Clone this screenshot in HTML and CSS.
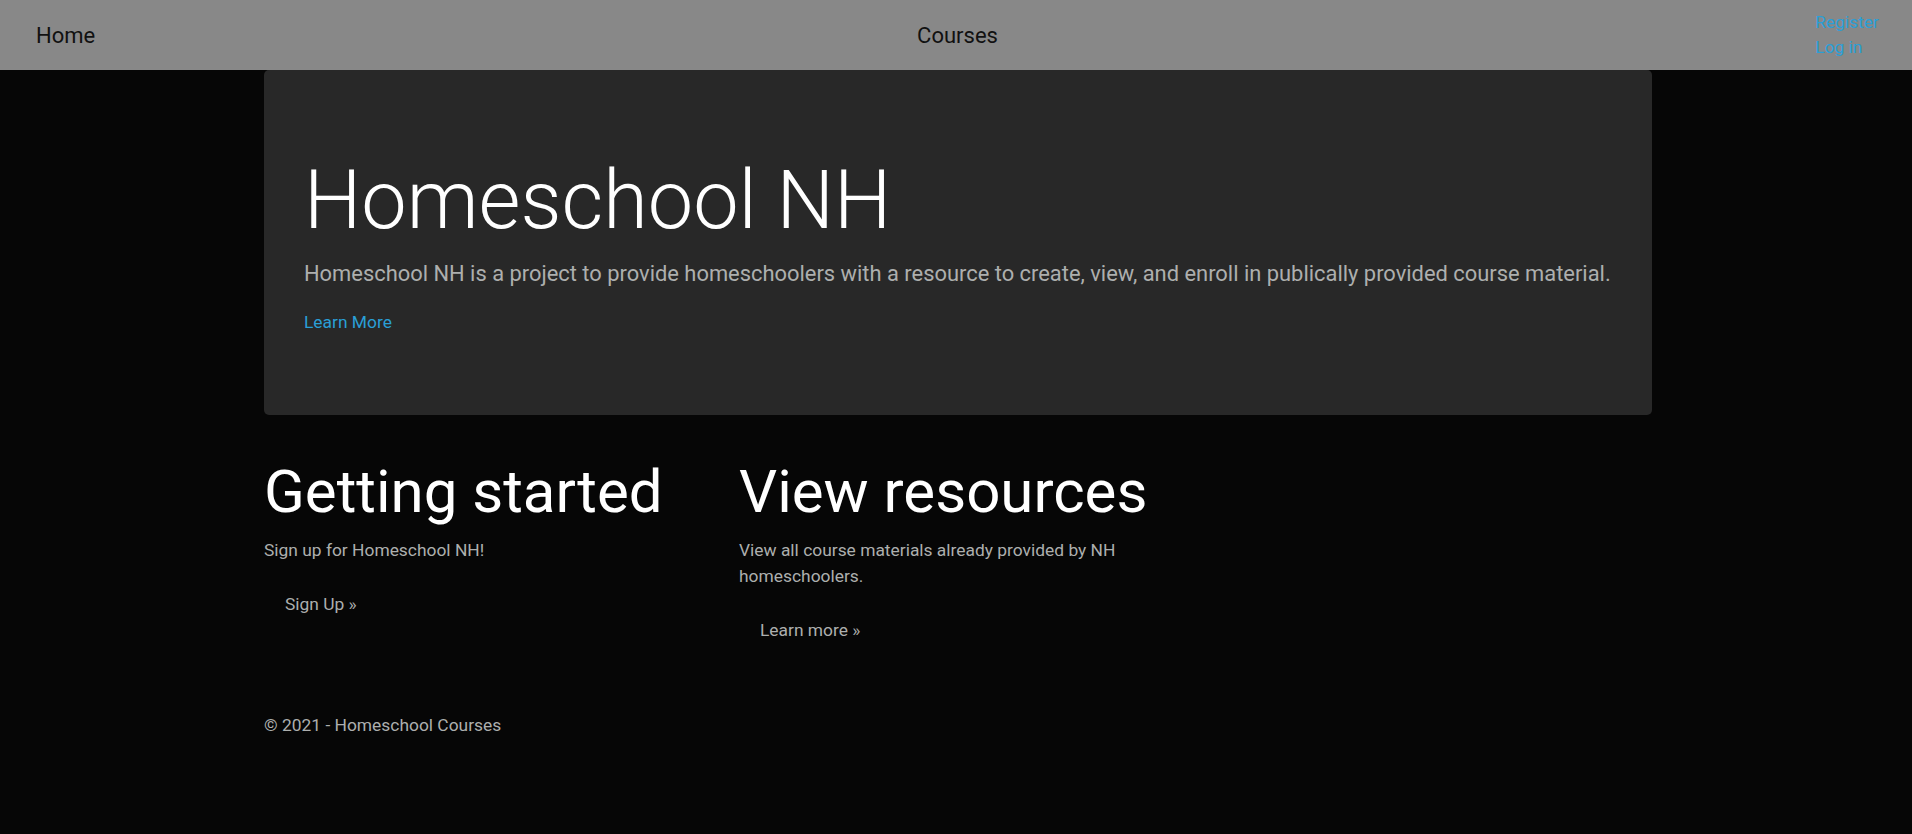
FILE: index.html
```html
<!DOCTYPE html>
<html lang="en">
<head>
<meta charset="utf-8">
<title>Home - Homeschool Courses</title>
<link rel="stylesheet" href="styles.css">
</head>
<body>
<header class="topbar">
  <a class="topbar-link" href="#">Home</a>
  <a class="topbar-link" href="#">Courses</a>
  <div class="auth">
    <a href="#">Register</a>
    <a href="#">Log in</a>
  </div>
</header>
<main class="container">
  <section class="hero">
    <h1 class="hero-title">Homeschool NH</h1>
    <p class="hero-lead">Homeschool NH is a project to provide homeschoolers with a resource to create, view, and enroll in publically provided course material.</p>
    <p class="hero-link"><a href="#">Learn More</a></p>
  </section>
  <div class="features">
    <div class="feature">
      <h2>Getting started</h2>
      <p>Sign up for Homeschool NH!</p>
      <p><a class="btn" href="#">Sign Up &raquo;</a></p>
    </div>
    <div class="feature">
      <h2>View resources</h2>
      <p>View all course materials already provided by NH homeschoolers.</p>
      <p><a class="btn" href="#">Learn more &raquo;</a></p>
    </div>
    <div class="feature"></div>
  </div>
  <footer class="footer">
    <p>&copy; 2021 - Homeschool Courses</p>
  </footer>
</main>
</body>
</html>
```

FILE: styles.css
```css
* {
  box-sizing: border-box;
}

html,
body {
  margin: 0;
}

body {
  background: #060606;
  color: #adafae;
  font-family: Roboto, "Liberation Sans", sans-serif;
  font-size: 17.4px;
  line-height: 1.5;
}

.topbar {
  display: grid;
  grid-template-columns: 1fr auto 1fr;
  align-items: center;
  height: 70px;
  background: #888888;
  padding: 0 33px 0 36px;
}

.topbar-link {
  color: #111111;
  font-size: 22px;
  line-height: 33px;
  text-decoration: none;
  justify-self: start;
}

.auth {
  justify-self: end;
  display: flex;
  flex-direction: column;
}

.auth a {
  color: #2a9fd6;
  font-size: 17.4px;
  line-height: 25px;
  text-decoration: none;
}

.container {
  width: 1388px;
  margin-left: 264px;
}

.hero {
  background: #282828;
  border-radius: 5px;
  padding: 82px 40px 62.5px;
  margin-bottom: 41px;
}

.hero-title {
  font-size: 81px;
  font-weight: 300;
  line-height: 1.2;
  color: #ffffff;
  margin: 0 0 8.5px;
}

.hero-lead {
  font-size: 21.9px;
  line-height: 1.5;
  margin: 0 0 18.5px;
}

.hero-link {
  margin: 0 0 17.4px;
}

.hero-link a {
  color: #2a9fd6;
  text-decoration: none;
}

.features {
  display: grid;
  grid-template-columns: repeat(3, 438px);
  column-gap: 37px;
}

.feature h2 {
  font-size: 60px;
  font-weight: 400;
  line-height: 1.2;
  color: #ffffff;
  margin: 0 0 8.5px;
}

.feature p {
  margin: 0 0 17.4px;
}

.btn {
  display: inline-block;
  padding: 10px 20px 10px;
  border: 1px solid transparent;
  color: #adafae;
  text-decoration: none;
}

.footer {
  margin-top: 40px;
}

.footer p {
  margin: 0 0 17.4px;
}
```
